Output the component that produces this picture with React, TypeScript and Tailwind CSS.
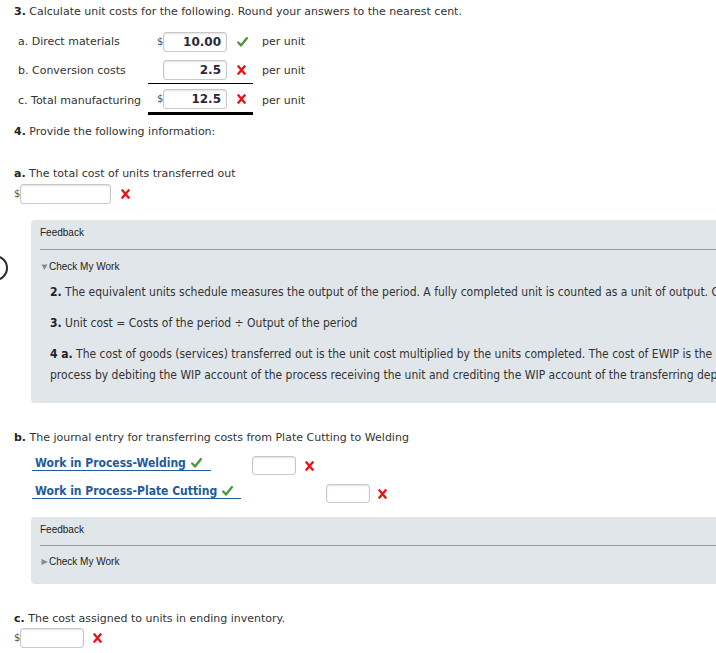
import React from "react";

const MAIN = { fontFamily: '"DejaVu Sans", Verdana, sans-serif' };
const COND = { fontFamily: '"DejaVu Sans Condensed", "DejaVu Sans", sans-serif' };
const ARIAL = { fontFamily: '"Liberation Sans", Arial, sans-serif' };

function Check() {
  return (
    <svg width="11" height="10" viewBox="0 0 11 10" className="shrink-0">
      <path d="M1.2 5.5 L4 8.4 L9.8 1.2" fill="none" stroke="#4c9a3c" strokeWidth="2.4" strokeLinecap="round" strokeLinejoin="round" />
    </svg>
  );
}

function Cross() {
  return (
    <svg width="9" height="10" viewBox="0 0 9 10" className="shrink-0">
      <path d="M1.5 1.5 L7.5 8.5 M7.5 1.5 L1.5 8.5" fill="none" stroke="#e8141c" strokeWidth="2.4" strokeLinecap="square" />
    </svg>
  );
}

function Box({ value, className }: { value?: string; className: string }) {
  return (
    <div
      className={`h-[20px] bg-white border border-[#c8c8c8] rounded-[3px] shadow-[inset_0_1px_2px_rgba(0,0,0,0.12)] flex items-center justify-end pr-[5px] font-bold text-[12px] text-[#2a2a3a] ${className}`}
    >
      {value}
    </div>
  );
}

function CostRow({
  label,
  dollar,
  value,
  ok,
  line,
  mt,
}: {
  label: string;
  dollar: boolean;
  value: string;
  ok: boolean;
  line: string;
  mt: string;
}) {
  return (
    <div className={`flex items-center pl-[18px] ${mt}`}>
      <div className="w-[130px] whitespace-nowrap">{label}</div>
      <div className={`w-[105px] ${line}`}>
        <div className="h-[26px] flex items-center">
          <span className="w-[15px] pl-[9px] text-[#555] text-[10px]">{dollar ? "$" : ""}</span>
          <Box value={value} className="w-[64px]" />
          <span className="ml-[10px] flex items-center">{ok ? <Check /> : <Cross />}</span>
        </div>
      </div>
      <div className="ml-[9px]">per unit</div>
    </div>
  );
}

function Feedback({ open, children }: { open: boolean; children?: React.ReactNode }) {
  return (
    <div className="ml-[31px] w-[1000px] bg-[#e0e6ea] rounded-[4px] pl-[9px] pt-[7px]" style={ARIAL}>
      <div className="text-[10px] leading-[12px] text-[#222]">Feedback</div>
      <div className={`h-px bg-[#9a9a9a] ${open ? "mt-[10px]" : "mt-[9px]"}`} />
      <div className={`flex items-center text-[10px] leading-[12px] text-[#222] ${open ? "mt-[11px]" : "mt-[10px]"}`}>
        <svg width="8" height="8" viewBox="0 0 8 8" className="ml-[1px] shrink-0">
          {open ? <path d="M0.5 1.5 H6.5 L3.5 7 Z" fill="#8a8a8a" /> : <path d="M0.5 1 V7 L7 4 Z" fill="#8a8a8a" />}
        </svg>
        <span>Check My Work</span>
      </div>
      {open ? <div className="pb-[17px]">{children}</div> : <div className="h-[16px]" />}
    </div>
  );
}

function Account({ name, width, boxGap, xGap }: { name: string; width: string; boxGap: string; xGap: string }) {
  return (
    <div className="flex items-start">
      <div
        className={`ml-[32px] ${width} border-b border-[#1f5c99] pl-[3px] flex items-center gap-[5px] font-bold text-[12px] leading-[14px] text-[#1f5c99] whitespace-nowrap`}
        style={COND}
      >
        {name} <Check />
      </div>
      <Box className={`${boxGap} w-[44px] !h-[19px]`} />
      <span className={`${xGap} mt-[5px] flex`}><Cross /></span>
    </div>
  );
}

export default function App() {
  return (
    <div className="relative w-[716px] h-[653px] overflow-hidden bg-white text-[11px] leading-[16px] text-[#333]" style={MAIN}>
      <div className="absolute left-[-18px] top-[255px] w-[26px] h-[26px] rounded-full border-2 border-[#2a2a2a]" />

      <div className="pl-[14px] pt-[4px]">
        <b className="text-[#222]">3.</b> Calculate unit costs for the following. Round your answers to the nearest cent.
      </div>

      <CostRow label="a. Direct materials" dollar value="10.00" ok line="" mt="mt-[9px]" />
      <CostRow label="b. Conversion costs" dollar={false} value="2.5" ok={false} line="border-b border-black" mt="mt-[2px]" />
      <CostRow label="c. Total manufacturing" dollar value="12.5" ok={false} line="border-b-[3px] border-black" mt="mt-[2px]" />

      <div className="pl-[14px] mt-[9px]">
        <b className="text-[#222]">4.</b> Provide the following information:
      </div>

      <div className="pl-[14px] mt-[26px]">
        <b className="text-[#222]">a.</b> The total cost of units transferred out
      </div>
      <div className="flex items-center pl-[14px] mt-[2px]">
        <span className="w-[6px] text-[#555] text-[10px]">$</span>
        <Box className="w-[91px]" />
        <span className="ml-[10px] flex"><Cross /></span>
      </div>

      <div className="mt-[16px]">
        <Feedback open>
          <div className="ml-[10px] mt-[9px] whitespace-nowrap leading-[21px] text-[12px] text-[#333]" style={COND}>
            <p>
              <b className="text-[#222]">2.</b> The equivalent units schedule measures the output of the period. A fully completed unit is counted as a unit of output.
              Output of the period equals units completed plus equivalent units in ending work in process.
            </p>
            <p className="mt-[10px]">
              <b className="text-[#222]">3.</b> Unit cost = Costs of the period ÷ Output of the period
            </p>
            <p className="mt-[10px]">
              <b className="text-[#222]">4 a.</b> The cost of goods (services) transferred out is the unit cost multiplied by the units completed. The cost of EWIP is the
              unit cost multiplied by the equivalent units.
              <br />
              process by debiting the WIP account of the process receiving the unit and crediting the WIP account of the transferring department.
            </p>
          </div>
        </Feedback>
      </div>

      <div className="pl-[14px] mt-[27px]">
        <b className="text-[#222]">b.</b> The journal entry for transferring costs from Plate Cutting to Welding
      </div>
      <div className="mt-[10px]">
        <Account name="Work in Process-Welding" width="w-[179px]" boxGap="ml-[41px]" xGap="ml-[9px]" />
      </div>
      <div className="mt-[9px]">
        <Account name="Work in Process-Plate Cutting" width="w-[209px]" boxGap="ml-[85px]" xGap="ml-[8px]" />
      </div>

      <div className="mt-[14px]">
        <Feedback open={false} />
      </div>

      <div className="pl-[14px] mt-[27px]">
        <b className="text-[#222]">c.</b> The cost assigned to units in ending inventory.
      </div>
      <div className="flex items-center pl-[14px] mt-[1px]">
        <span className="w-[6px] text-[#555] text-[10px]">$</span>
        <Box className="w-[64px]" />
        <span className="ml-[9px] flex"><Cross /></span>
      </div>
    </div>
  );
}
